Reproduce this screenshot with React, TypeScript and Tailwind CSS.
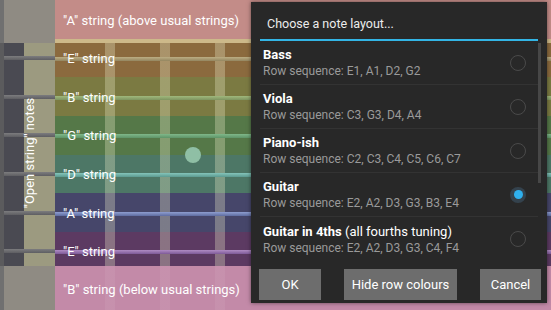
const bands = [
  { label: '"E" string', h: "h-[34px]", top: "h-[7px]", bg: "bg-[#8b6a3e]", str: "bg-[linear-gradient(#bcae84,#948660)]" },
  { label: '"B" string', h: "h-[39px]", top: "h-[12px]", bg: "bg-[#7b7a42]", str: "bg-[linear-gradient(#a0b87c,#7e9460)]" },
  { label: '"G" string', h: "h-[39px]", top: "h-[11px]", bg: "bg-[#557848]", str: "bg-[linear-gradient(#80b88a,#5e9468)]" },
  { label: '"D" string', h: "h-[38px]", top: "h-[11px]", bg: "bg-[#4d7766]", str: "bg-[linear-gradient(#84c4ba,#5c9a90)]" },
  { label: '"A" string', h: "h-[39px]", top: "h-[12px]", bg: "bg-[#46466a]", str: "bg-[linear-gradient(#8e9ed0,#5e6ca0)]" },
  { label: '"E" string', h: "h-[34px]", top: "h-[11px]", bg: "bg-[#5c3a62]", str: "bg-[linear-gradient(#b08cc4,#7e5a98)]" },
];

const leftHeights = ["h-[34px]", "h-[39px]", "h-[39px]", "h-[38px]", "h-[39px]", "h-[34px]"];
const leftTops = ["h-[13px]", "h-[18px]", "h-[17px]", "h-[17px]", "h-[18px]", "h-[17px]"];

const layouts = [
  { name: "Bass", extra: "", seq: "E1, A1, D2, G2", on: false },
  { name: "Viola", extra: "", seq: "C3, G3, D4, A4", on: false },
  { name: "Piano-ish", extra: "", seq: "C2, C3, C4, C5, C6, C7", on: false },
  { name: "Guitar", extra: "", seq: "E2, A2, D3, G3, B3, E4", on: true },
  { name: "Guitar in 4ths", extra: " (all fourths tuning)", seq: "E2, A2, D3, G3, C4, F4", on: false },
];

const frets =
  "bg-[linear-gradient(to_right,transparent_50px,rgba(235,235,200,0.32)_50px,rgba(235,235,200,0.32)_60px,transparent_60px,transparent_105px,rgba(235,235,200,0.32)_105px,rgba(235,235,200,0.32)_115px,transparent_115px,transparent_160px,rgba(235,235,200,0.32)_160px,rgba(235,235,200,0.32)_170px,transparent_170px)]";

const App = () => {
  return (
    <div className="relative w-[551px] h-[310px] overflow-hidden flex font-['Roboto',sans-serif] text-white">
      {/* nut side */}
      <div className="w-[55px] flex flex-col">
        <div className="h-[43px] bg-[linear-gradient(to_right,#707070_4px,#8f8b83_4px)]" />
        <div className="flex flex-col bg-[linear-gradient(to_right,#5b5b5d_4px,#4a4a52_4px,#4a4a52_24px,#9c9a80_24px)]">
          {leftHeights.map((h, i) => (
            <div key={i} className={`${h} flex flex-col`}>
              <div className={leftTops[i]} />
              <div className="h-[4px] ml-[4px] bg-[linear-gradient(#7c7c7e,#5e5e62)]" />
            </div>
          ))}
        </div>
        <div className="flex-1 bg-[linear-gradient(to_right,#707070_4px,#8f8b83_4px)]" />
      </div>

      {/* fretboard */}
      <div className="flex-1 flex flex-col text-[13px] leading-4">
        <div className="h-[39px] bg-[#c38c88] flex items-center pl-2 pt-[2px]">
          "A" string (above usual strings)
        </div>
        <div className="h-[4px] bg-[#cdb98a]" />
        {bands.map((b, i) => (
          <div key={i} className={`${b.h} ${b.bg} ${frets} flex flex-col`}>
            <div className={b.top} />
            <div className="grid h-4">
              <div className={`[grid-area:1/1] self-center h-[4px] ${b.str}`} />
              <div className="[grid-area:1/1] pl-2 pt-[1px]">{b.label}</div>
            </div>
          </div>
        ))}
        <div className="flex-1 bg-[#c38aa8] bg-[linear-gradient(to_right,transparent_50px,rgba(255,255,255,0.06)_50px,rgba(255,255,255,0.06)_60px,transparent_60px,transparent_105px,rgba(255,255,255,0.06)_105px,rgba(255,255,255,0.06)_115px,transparent_115px,transparent_160px,rgba(255,255,255,0.06)_160px,rgba(255,255,255,0.06)_170px,transparent_170px)] flex items-center pl-2 pt-[4px]">
          "B" string (below usual strings)
        </div>
      </div>

      {/* vertical label */}
      <div className="absolute left-[30px] top-[153px] -translate-x-1/2 -translate-y-1/2 -rotate-90 whitespace-nowrap text-[13px] leading-4">
        "Open string" notes
      </div>

      {/* fret marker dot */}
      <div className="absolute left-[185px] top-[147px] w-4 h-4 rounded-full bg-[#8fbfa5]" />

      {/* dialog */}
      <div className="absolute left-[251px] top-[2px] w-[296px] h-[301px] bg-[#282828] flex flex-col shadow-[0_0_4px_rgba(0,0,0,0.5)]">
        <div className="h-[37px] flex items-center pl-4 pt-[7px] text-[12.5px] text-[#ececec]">
          Choose a note layout...
        </div>
        <div className="h-[2px] mx-[9px] bg-[#33b5e5]" />
        <div className="flex pl-[9px] pr-[6px]">
          <div className="flex-1 flex flex-col">
            {layouts.map((l, i) => (
              <div
                key={l.name}
                className={`h-[44px] flex items-center pl-[3px] pr-[12px] ${i < 4 ? "border-b border-[#333333]" : ""}`}
              >
                <div className="flex-1 flex flex-col pt-[1px]">
                  <div className="text-[13px] leading-4 text-white">
                    <span className="font-bold">{l.name}</span>
                    {l.extra}
                  </div>
                  <div className="text-[12px] leading-4 text-[#9a9a9a]">Row sequence: {l.seq}</div>
                </div>
                {l.on ? (
                  <div className="w-4 h-4 rounded-full bg-[#34424d] flex items-center justify-center">
                    <div className="w-[9px] h-[9px] rounded-full bg-[#2fb0ee]" />
                  </div>
                ) : (
                  <div className="w-4 h-4 rounded-full border-[1.5px] border-[#4a4a4a]" />
                )}
              </div>
            ))}
          </div>
          <div className="w-[3px] h-[140px] mt-[2px] bg-[#474747]" />
        </div>
        <div className="flex justify-between pl-[8px] pr-[6px] pt-[8px]">
          <div className="w-[62px] h-[31px] bg-[#6d6d6d] flex items-center justify-center text-[13px]">OK</div>
          <div className="w-[113px] h-[31px] bg-[#6d6d6d] flex items-center justify-center text-[13px]">
            Hide row colours
          </div>
          <div className="w-[61px] h-[31px] bg-[#6d6d6d] flex items-center justify-center text-[13px]">Cancel</div>
        </div>
      </div>
    </div>
  );
};

export default App;
